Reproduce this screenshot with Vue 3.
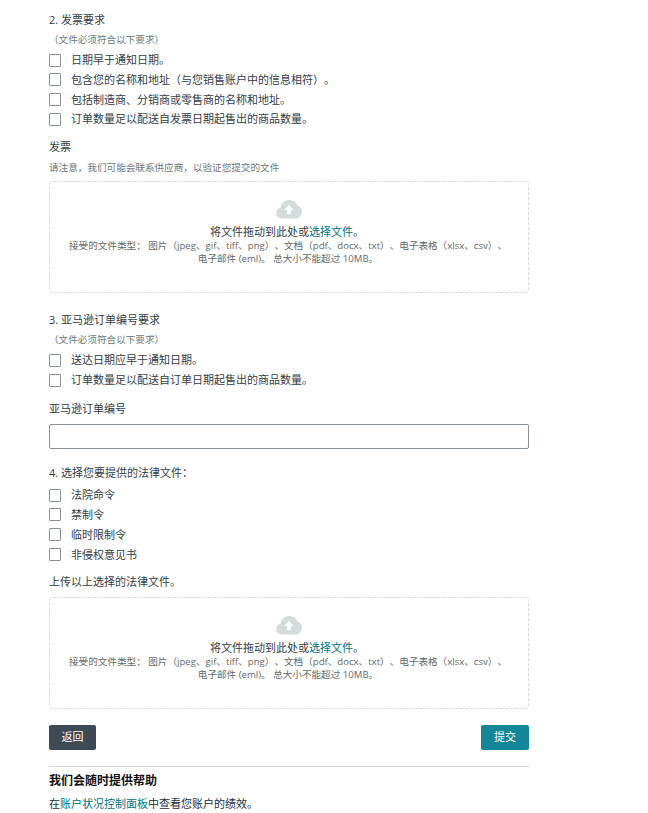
<script setup>
const upload = { types: '接受的文件类型： 图片（jpeg、gif、tiff、png）、文档（pdf、docx、txt）、电子表格（xlsx、csv）、', limit: '电子邮件 (eml)。 总大小不能超过 10MB。' }
const req2 = ['日期早于通知日期。', '包含您的名称和地址（与您销售账户中的信息相符）。', '包括制造商、分销商或零售商的名称和地址。', '订单数量足以配送自发票日期起售出的商品数量。']
const req3 = ['送达日期应早于通知日期。', '订单数量足以配送自订单日期起售出的商品数量。']
const req4 = ['法院命令', '禁制令', '临时限制令', '非侵权意见书']
</script>

<template>
  <main class="page">
    <section class="sec2">
      <h3 class="heading">2. 发票要求</h3>
      <p class="sub">（文件必须符合以下要求）</p>
      <ul class="checks">
        <li v-for="t in req2" :key="t"><span class="box"></span>{{ t }}</li>
      </ul>
      <div class="label l-invoice">发票</div>
      <p class="note">请注意，我们可能会联系供应商，以验证您提交的文件</p>
      <div class="drop">
        <svg class="cloud" viewBox="0 0 26 20" width="26" height="20"><path fill="#d5dbdb" d="M6 18.5C2.6 18.5 0 16 0 13c0-2.7 2-4.9 4.7-5.4C5.3 3.3 9 0 13.5 0c3.9 0 7.1 2.3 8.2 5.6 2.5.9 4.3 3.2 4.3 6.1 0 3.7-3 6.8-6.8 6.8z"/><path fill="#fff" d="M13 5.2l4.8 4.9h-2.8v4.2h-4v-4.2H8.200z"/></svg>
        <div class="drop-title">将文件拖动到此处或<a>选择文件</a>。</div>
        <div class="drop-text">{{ upload.types }}<br>{{ upload.limit }}</div>
      </div>
    </section>

    <section class="sec3">
      <h3 class="heading">3. 亚马逊订单编号要求</h3>
      <p class="sub">（文件必须符合以下要求）</p>
      <ul class="checks">
        <li v-for="t in req3" :key="t"><span class="box"></span>{{ t }}</li>
      </ul>
      <div class="label l-order">亚马逊订单编号</div>
      <input class="input" type="text" />
    </section>

    <section class="sec4">
      <h3 class="heading">4. 选择您要提供的法律文件：</h3>
      <ul class="checks checks4">
        <li v-for="t in req4" :key="t"><span class="box"></span>{{ t }}</li>
      </ul>
      <div class="label l-legal">上传以上选择的法律文件。</div>
      <div class="drop">
        <svg class="cloud" viewBox="0 0 26 20" width="26" height="20"><path fill="#d5dbdb" d="M6 18.5C2.6 18.5 0 16 0 13c0-2.7 2-4.9 4.7-5.4C5.3 3.3 9 0 13.5 0c3.9 0 7.1 2.3 8.2 5.6 2.5.9 4.3 3.2 4.3 6.1 0 3.7-3 6.8-6.8 6.8z"/><path fill="#fff" d="M13 5.2l4.8 4.9h-2.8v4.2h-4v-4.2H8.200z"/></svg>
        <div class="drop-title">将文件拖动到此处或<a>选择文件</a>。</div>
        <div class="drop-text">{{ upload.types }}<br>{{ upload.limit }}</div>
      </div>
    </section>

    <div class="actions">
      <button class="btn back">返回</button>
      <button class="btn submit">提交</button>
    </div>
    <hr class="rule" />
    <h4 class="help">我们会随时提供帮助</h4>
    <p class="help-text">在<a>账户状况控制面板</a>中查看您账户的绩效。</p>
  </main>
</template>

<style>
html, body { margin: 0; background: #fff; }
</style>

<style scoped>
.page {
  width: 480px;
  height: 813px;
  overflow: hidden;
  margin-left: 49px;
  padding-top: 11px;
  box-sizing: border-box;
  font-family: "Open Sans", "Noto Sans CJK SC", sans-serif;
  font-size: 11px;
  line-height: 18px;
  color: #333c47;
  text-spacing-trim: space-all;
}
.heading { margin: 0; font-size: 11px; font-weight: 400; }
.sub { margin: 2px 0 0; font-size: 9.6px; color: #6c7778; }
.checks { list-style: none; margin: 2px 0 0; padding: 0; display: flex; flex-direction: column; gap: 1.8px; }
.checks li { display: flex; align-items: center; height: 18px; }
.box { width: 10px; height: 11px; border: 1px solid #8a9197; border-radius: 1px; margin-right: 10px; flex: none; }
.label { font-size: 11px; }
.l-invoice { margin-top: 10px; }
.note { margin: 3px 0 0; font-size: 9.6px; color: #6c7778; }
.drop {
  box-sizing: border-box;
  height: 112px;
  margin-top: 4px;
  padding-top: 18px;
  border: 1px dashed #d5dbdb;
  border-radius: 4px;
  text-align: center;
}
.cloud { display: block; margin: 0 auto; }
.drop-title { margin-top: 4px; line-height: 15px; font-size: 11px; color: #333c47; padding-right: 4px; }
.drop-title a, .help-text a { color: #007185; }
.drop-text { font-size: 9.6px; line-height: 13px; color: #5f6b6b; padding: 0 2px 0 0; white-space: nowrap; }
.sec3 { margin-top: 18px; }
.l-order { margin-top: 11px; }
.input {
  display: block;
  box-sizing: border-box;
  width: 480px;
  height: 25px;
  margin-top: 6px;
  border: 1px solid #8a9197;
  border-radius: 2px;
  background: #fff;
  outline: none;
}
.sec4 { margin-top: 15px; }
.checks4 { margin-top: 4px; }
.l-legal { margin-top: 9px; }
.l-legal + .drop { margin-top: 6px; }
.actions { display: flex; justify-content: space-between; margin-top: 16px; }
.btn {
  height: 25px;
  border: 0;
  border-radius: 2px;
  color: #fff;
  font: inherit;
  padding: 0;
}
.back { width: 47px; background: #3f4855; }
.submit { width: 48px; background: #148698; }
.rule { border: 0; border-top: 1px solid #d5d5d5; margin: 16px 0 0; }
.help { margin: 5px 0 0; font-size: 12px; font-weight: 700; color: #111; line-height: 18px; }
.help-text { margin: 5px 0 0; font-size: 11px; color: #232f3e; }
</style>
